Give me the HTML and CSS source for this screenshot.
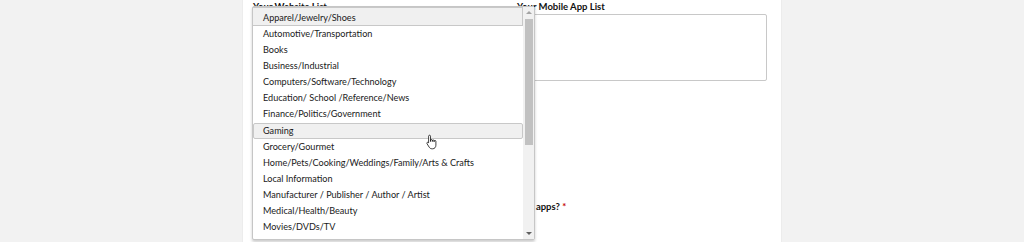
FILE: index.html
```html
<!DOCTYPE html>
<html lang="en">
<head>
  <meta charset="UTF-8" />
  <title>Website and App Lists</title>
  <link rel="stylesheet" href="styles.css">
</head>
<body>
  <div class="panel">
    <div class="col">
      <label class="label">Your Website List</label>
      <div class="select-box"></div>

      <div class="dropdown">
        <ul class="options">
          <li class="option active">Apparel/Jewelry/Shoes</li>
          <li class="option">Automotive/Transportation</li>
          <li class="option">Books</li>
          <li class="option">Business/Industrial</li>
          <li class="option">Computers/Software/Technology</li>
          <li class="option">Education/ School /Reference/News</li>
          <li class="option">Finance/Politics/Government</li>
          <li class="option hover">Gaming</li>
          <li class="option">Grocery/Gourmet</li>
          <li class="option">Home/Pets/Cooking/Weddings/Family/Arts &amp; Crafts</li>
          <li class="option">Local Information</li>
          <li class="option">Manufacturer / Publisher / Author / Artist</li>
          <li class="option">Medical/Health/Beauty</li>
          <li class="option">Movies/DVDs/TV</li>
        </ul>
        <div class="scrollbar">
          <span class="arrow up"></span>
          <div class="track"><div class="thumb"></div></div>
          <span class="arrow down"></span>
        </div>
        <!-- pointer hovering the Gaming row -->
        <svg class="cursor" width="12" height="16" viewBox="0 0 12 16">
          <path d="M3.5 1.2c.6 0 1 .4 1 1v5.3V6.4c0-.5.4-.9.9-.9s.9.4.9.9v1.1-.7c0-.5.4-.9.9-.9s.9.4.9.9v1 -.5c0-.5.4-.9.9-.9s.9.4.9.9v3.9c0 2-1.3 3.6-3.3 3.6H6c-1.3 0-2.1-.6-2.8-1.6L1 9.7c-.3-.5-.2-1 .2-1.3.4-.3 1-.2 1.3.2l.1.2V2.2c0-.6.4-1 .9-1z" fill="#fff" stroke="#111" stroke-width=".8" stroke-linejoin="round"/>
        </svg>
      </div>
    </div>

    <div class="col">
      <label class="label">Your Mobile App List</label>
      <textarea class="textarea"></textarea>
      <p class="question">Any apps? <span class="req">*</span></p>
    </div>
  </div>
</body>
</html>
```

FILE: styles.css
```css
body {
  margin: 0;
  background-color: #f2f2f2;
  font-family: Lato, "Liberation Sans", sans-serif;
  color: #1a1a1a;
  height: 242px;
  overflow: hidden;
}
.panel {
  margin-left: 243px;
  width: 538px;
  height: 242px;
  box-sizing: border-box;
  padding: 0 14px 0 10px;
  background-color: #fff;
  box-shadow: 0 0 1px rgba(0,0,0,0.15);
  display: grid;
  grid-template-columns: 250px 250px;
  column-gap: 14px;
  align-content: start;
}
.col {
  position: relative;
  display: flex;
  flex-direction: column;
}
.label {
  display: block;
  padding-top: 1px;
  font-size: 9.5px;
  font-weight: bold;
  line-height: 11px;
  color: #111;
}
.select-box {
  margin-top: 2px;
  height: 24px;
  border: 1px solid #ccc;
  border-radius: 2px;
}
.textarea {
  margin: 2px 0 0;
  height: 67px;
  box-sizing: border-box;
  border: 1px solid #c8c8c8;
  border-radius: 2px;
  resize: none;
}
.question {
  margin: 120px 0 0;
  font-size: 9.5px;
  font-weight: bold;
  line-height: 12px;
  color: #111;
}
.req {
  color: #c40000;
}

/* open dropdown list */
.dropdown {
  position: absolute;
  left: -1px;
  top: 6px;
  width: 283px;
  height: 234px;
  box-sizing: border-box;
  display: flex;
  background-color: #fff;
  border: 1px solid #c6c6c6;
  border-radius: 2px;
  box-shadow: 0 2px 3px rgba(0,0,0,0.2);
  z-index: 2;
}
.options {
  flex: 1;
  list-style: none;
  margin: 0;
  padding: 0;
  overflow: hidden;
}
.option {
  height: 16.1px;
  line-height: 16px;
  padding-left: 10px;
  font-size: 9.1px;
  white-space: nowrap;
  box-sizing: border-box;
}
.option.active {
  height: 19px;
  line-height: 17px;
  padding-top: 1px;
  background-color: #f0f0f0;
  border: 1px solid #c8c8c8;
  border-left: none;
}
.option.hover {
  background-color: #f0f0f0;
  border: 1px solid #c8c8c8;
  border-radius: 2px;
  line-height: 14px;
  padding-left: 9px;
}
.scrollbar {
  width: 11px;
  display: flex;
  flex-direction: column;
  align-items: center;
  background-color: #f1f1f1;
}
.track {
  flex: 1;
  width: 100%;
  display: flex;
  justify-content: center;
  padding-top: 1px;
}
.thumb {
  width: 8px;
  height: 126px;
  background-color: #c1c1c1;
}
.arrow {
  width: 0;
  height: 0;
  margin: 4px 0;
  border-left: 3px solid transparent;
  border-right: 3px solid transparent;
}
.arrow.up {
  border-bottom: 3px solid #a3a3a3;
}
.arrow.down {
  border-top: 3px solid #606060;
}
.cursor {
  position: absolute;
  left: 173px;
  top: 127px;
}
```
